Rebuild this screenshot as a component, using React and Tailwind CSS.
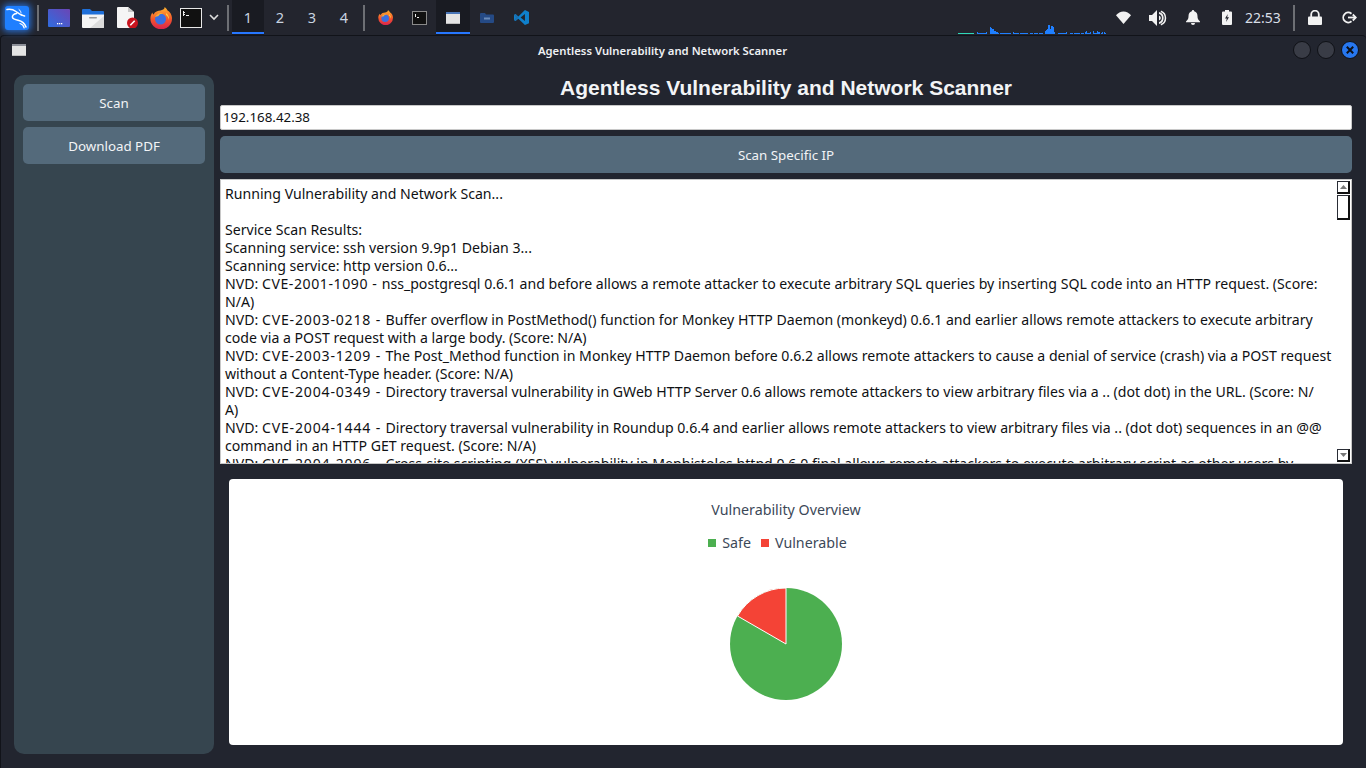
import React from "react";

const Slot = ({ w, active, children }) => (
  <div className={`relative flex h-[35px] shrink-0 items-center justify-center ${active ? "bg-[#191b22]" : ""}`} style={{ width: w }}>
    {children}
    {active && <div className="absolute bottom-[1px] left-0 right-0 h-[2px] bg-[#2777ff]" />}
  </div>
);
const Sep = () => (
  <Slot w={8}><div className="h-[26px] w-[2px] bg-[#6d6f74]" /></Slot>
);

const Kali = () => (
  <div className="h-[24px] w-[24px] rounded-[3px] bg-[#1f7fff] shadow-[0_0_6px_2px_rgba(40,130,255,0.75)]">
    <svg viewBox="0 0 24 24" width="24" height="24" fill="none" stroke="#fff" strokeLinecap="round" strokeLinejoin="round">
      <path strokeWidth="1.5" d="M2 3.500c3.500-.6 6.500.2 9 2 2 1.500 3.600 3.200 5.800 3.400" />
      <path strokeWidth="1.4" d="M16 8.800l3.600 1.200" />
      <path strokeWidth="1.5" d="M11.500 7.500C8.500 8 7 9.500 7.500 11.500c.5 1.700 3 2.200 5.500 2.700 3.500.7 6.500 2.300 8 6.800" />
      <path strokeWidth="1.2" d="M15 17.500c2 .5 3.500 1.700 4.200 4.500" />
      <path strokeWidth="1" d="M14 3.500c1.500 1 2 2.500 2 3.500" />
    </svg>
  </div>
);
const WinBlue = () => (
  <svg width="22" height="18" viewBox="0 0 22 18">
    <defs><linearGradient id="wb" x1="0" y1="1" x2="1" y2="0"><stop offset="0" stopColor="#2f6de0" /><stop offset="1" stopColor="#6b45b5" /></linearGradient></defs>
    <rect width="22" height="18" rx="1" fill="url(#wb)" />
    <rect x="9" y="14" width="1.300" height="1.300" fill="#fff" /><rect x="11" y="14" width="1.300" height="1.300" fill="#fff" /><rect x="13" y="14" width="1.300" height="1.300" fill="#fff" />
  </svg>
);
const Folder = () => (
  <svg width="22" height="20" viewBox="0 0 22 20">
    <path d="M0 2a1 1 0 0 1 1-1h7l2 2h11a1 1 0 0 1 1 1v4H0z" fill="#1f6fd8" />
    <path d="M0 6.500h22V19a1 1 0 0 1-1 1H1a1 1 0 0 1-1-1z" fill="#f4f4f4" />
    <path d="M22 8v11a1 1 0 0 1-1 1H8z" fill="#dcdcdc" />
    <rect x="7" y="9" width="8" height="1.500" rx=".7" fill="#9a9a9a" />
  </svg>
);
const Doc = () => (
  <svg width="21" height="21" viewBox="0 0 21 21">
    <path d="M1 0h10l6 5v15a1 1 0 0 1-1 1H1a1 1 0 0 1-1-1V1a1 1 0 0 1 1-1z" fill="#f5f5f5" />
    <path d="M11 0l6 5h-6z" fill="#c8c8c8" />
    <circle cx="15.500" cy="16" r="5.500" fill="#c8141e" />
    <path d="M13.300 18.200l4.400-4.400" stroke="#fff" strokeWidth="1.600" />
  </svg>
);
const Firefox = ({ s = 22 }) => (
  <svg width={s} height={s} viewBox="0 0 22 22">
    <defs><linearGradient id="ff" x1="0.500" y1="0" x2="0.500" y2="1"><stop offset="0" stopColor="#ffb52e" /><stop offset=".55" stopColor="#f4552c" /><stop offset="1" stopColor="#d8224e" /></linearGradient></defs>
    <path d="M14.500 0c3 2 2.500 3.500 4.500 4.500 2.500 2.500 3 5 3 7a10.800 10.800 0 1 1-21.600 0C.4 9 1.500 6.500 2.500 5.500c0 1 .5 1.800 1 2C5 4.500 8 3.500 10.500 3.500 12.500 3 15 2.500 14.500 0z" fill="url(#ff)" />
    <circle cx="10.500" cy="12" r="5.500" fill="#3a6fe0" />
    <path d="M5 10c1.500-3 5-5 8-3.500-2.500 0-4 1-4.500 2.500z" fill="#ffae2b" />
    <path d="M16 6c2 1.500 3.500 4 3 7-.5-2.500-1.500-4-3-5z" fill="#ffd23f" />
  </svg>
);
const Term = () => (
  <svg width="22" height="20" viewBox="0 0 22 20" shapeRendering="crispEdges">
    <rect x=".5" y=".5" width="21" height="19" rx="1" fill="#111" stroke="#e8e8e8" />
    <path d="M3 3h1v5H3zM2.500 4h2v1h-2zM2.500 6h2v1h-2zM6 7h3v1H6z" fill="#eee" />
  </svg>
);
const Chevron = () => (
  <svg width="10" height="7" viewBox="0 0 10 7" fill="none" stroke="#ddd" strokeWidth="1.600"><path d="M1 1l4 4 4-4" /></svg>
);
const Win = ({ bar }) => (
  <svg width="14" height="12" viewBox="0 0 14 12" shapeRendering="crispEdges">
    <rect width="14" height="12" fill="#e4e4e4" />
    <rect width="14" height="2" fill={bar} />
    <rect y="11" width="14" height="1" fill="#bdbdbd" />
  </svg>
);
const FolderDim = () => (
  <svg width="14" height="10" viewBox="0 0 14 10">
    <path d="M0 1a1 1 0 0 1 1-1h4l1 1.500h7a1 1 0 0 1 1 1V9a1 1 0 0 1-1 1H1a1 1 0 0 1-1-1z" fill="#254a85" />
    <rect x="4" y="4.500" width="6" height="2" fill="#6a8ab8" />
  </svg>
);
const VSCode = () => (
  <svg width="15" height="15" viewBox="0 0 24 24">
    <path d="M17.500 0L24 3v18l-6.500 3L7 13.800 2.500 17.500 0 16V8l2.500-1.500L7 10.200z" fill="#0f80cc" />
    <path d="M17.500 6.500L10.500 12l7 5.500z" fill="#22252e" />
    <path d="M0 8l2.500-1.500 4.500 5.500-4.500 5.500L0 16l3-4z" fill="#1a6fb0" />
  </svg>
);
const Wifi = () => (
  <svg width="15" height="13" viewBox="0 0 15 13"><path d="M7.500 13L0 4.200C2 2 4.500.5 7.500.5S13 2 15 4.200z" fill="#f2f2f2" /></svg>
);
const Speaker = () => (
  <svg width="18" height="16" viewBox="0 0 18 16" fill="#f2f2f2">
    <path d="M0 5h3l5-5v16l-5-5H0z" />
    <path d="M10 2a6.200 6.200 0 0 1 0 12v-2a4.200 4.200 0 0 0 0-8z" />
    <path d="M10 5.500a2.600 2.600 0 0 1 0 5z" />
    <path d="M12 .5a8 8 0 0 1 0 15l-.3-1.500a6.500 6.500 0 0 0 0-12z" />
  </svg>
);
const Bell = () => (
  <svg width="14" height="15" viewBox="0 0 14 15" fill="#f2f2f2">
    <path d="M7 0a1.200 1.200 0 0 1 1.200 1.200c2.300.6 3.300 2.500 3.300 5 0 2.500.8 3.500 2.500 5.300v.8H0v-.8c1.700-1.800 2.500-2.800 2.500-5.300s1-4.400 3.300-5A1.200 1.200 0 0 1 7 0z" />
    <path d="M5 13h4a2 2 0 0 1-4 0z" />
  </svg>
);
const Battery = () => (
  <svg width="10" height="15" viewBox="0 0 10 15">
    <path d="M3 0h4v1.500h2a1 1 0 0 1 1 1V14a1 1 0 0 1-1 1H1a1 1 0 0 1-1-1V2.500a1 1 0 0 1 1-1h2z" fill="#f2f2f2" />
    <path d="M5.800 4L3 8.500h1.800L4 12l3-4.700H5.200z" fill="#23252e" />
  </svg>
);
const Lock = () => (
  <svg width="14" height="15" viewBox="0 0 14 15">
    <path d="M3.200 7V4.500a3.800 3.800 0 0 1 7.600 0V7" fill="none" stroke="#f2f2f2" strokeWidth="1.800" />
    <rect y="6.500" width="14" height="8.500" rx="1" fill="#f2f2f2" />
  </svg>
);
const Logout = () => (
  <svg width="15" height="13" viewBox="0 0 15 13" fill="none" stroke="#f2f2f2" strokeWidth="1.800">
    <path d="M9.500 2.700A5 5 0 1 0 9.500 10.300" />
    <path d="M6 6.500h7.500" />
    <path d="M10.800 3.500l3 3-3 3" />
  </svg>
);

const graph = [
  [958,1,"#2fd8b8"],[959,1,"#2fd8b8"],[960,1,"#2fd8b8"],[961,1,"#2fd8b8"],[962,1,"#2fd8b8"],[963,1,"#2fd8b8"],[964,1,"#2fd8b8"],[965,1,"#2fd8b8"],[966,1,"#2fd8b8"],[967,1,"#2fd8b8"],[968,1,"#2fd8b8"],[969,1,"#2fd8b8"],[970,1,"#2fd8b8"],[971,1,"#2fd8b8"],[972,1,"#2fd8b8"],[973,1,"#2fd8b8"],
  [977,2],[978,1],[979,1],[980,1],[981,1],[982,1],[983,1],[984,1],[985,1],[986,2],
  [990,7],[991,6],[992,5],[993,5],[994,3],[995,3],[996,2],[997,2],[998,1],[1000,1],[1001,1],[1002,1],[1003,1],[1004,1],[1005,1],[1006,1],[1007,1],[1008,1],[1009,1],[1010,1],
  [1013,2],[1014,1],[1015,1],[1016,1],[1017,1],[1018,1],[1020,1],[1021,1],[1022,1],[1023,1],[1024,1],[1025,1],[1026,1],[1027,1],
  [1030,1],[1031,1],[1032,1],[1034,1],[1035,1],[1036,1],[1037,1],[1039,1],[1040,1],[1041,1],[1042,1],
  [1045,3],[1046,4],[1047,5],[1048,9],[1049,9],[1050,5],[1051,8],[1052,8],[1053,7],[1054,2],[1058,1],[1059,1],[1060,1],[1061,1],[1062,1],[1063,1],[1064,1],[1065,1],[1066,2],
  [1070,1],[1071,1],[1072,1],[1074,1],[1075,1],[1076,1],[1077,1],[1078,1],[1079,1],[1081,1],[1082,1],[1083,1],[1085,2],[1086,3],[1087,1],[1088,1],[1089,1],[1090,2],
  [1093,3],[1094,1],[1095,1],[1096,1],[1097,3],[1098,2],[1099,2],[1101,1],[1102,2],[1104,2],[1105,1],
];
const NetGraph = () => (
  <svg width="148" height="11" viewBox="958 0 148 11" shapeRendering="crispEdges" className="mt-auto mb-[1px]">
    {graph.map(([x, h, c], i) => <rect key={i} x={x} y={11 - h} width="1" height={h} fill={c || "#1f7fff"} />)}
  </svg>
);

const WinBtn = ({ close }) => (
  <div className={`flex h-[18px] w-[18px] items-center justify-center rounded-full border border-[#0f1116] ${close ? "bg-[#2777ef]" : "bg-[#393c46]"}`}>
    {close && <svg width="8" height="8" viewBox="0 0 8 8" stroke="#0d1016" strokeWidth="2"><path d="M.8.8l6.400 6.400M7.200.8L.8 7.200" /></svg>}
  </div>
);

const lines = [
  "Running Vulnerability and Network Scan...",
  "",
  "Service Scan Results:",
  "Scanning service: ssh version 9.9p1 Debian 3...",
  "Scanning service: http version 0.6...",
  "NVD: CVE-2001-1090 - nss_postgresql 0.6.1 and before allows a remote attacker to execute arbitrary SQL queries by inserting SQL code into an HTTP request. (Score:",
  "N/A)",
  "NVD: CVE-2003-0218 - Buffer overflow in PostMethod() function for Monkey HTTP Daemon (monkeyd) 0.6.1 and earlier allows remote attackers to execute arbitrary",
  "code via a POST request with a large body. (Score: N/A)",
  "NVD: CVE-2003-1209 - The Post_Method function in Monkey HTTP Daemon before 0.6.2 allows remote attackers to cause a denial of service (crash) via a POST request",
  "without a Content-Type header. (Score: N/A)",
  "NVD: CVE-2004-0349 - Directory traversal vulnerability in GWeb HTTP Server 0.6 allows remote attackers to view arbitrary files via a .. (dot dot) in the URL. (Score: N/",
  "A)",
  "NVD: CVE-2004-1444 - Directory traversal vulnerability in Roundup 0.6.4 and earlier allows remote attackers to view arbitrary files via .. (dot dot) sequences in an @@",
  "command in an HTTP GET request. (Score: N/A)",
  "NVD: CVE-2004-2096 - Cross-site scripting (XSS) vulnerability in Mephistoles httpd 0.6.0 final allows remote attackers to execute arbitrary script as other users by",
];

const LogLine = ({ text }) => {
  const m = text.match(/^(NVD: )(CVE-\d+-\d+ - )(.*)$/);
  if (!m) return <div className="h-[18px]">{text}</div>;
  return (
    <div className="h-[18px]">
      {m[1]}<span className={m[2].startsWith("CVE-2001") ? "tracking-[0.56px]" : "tracking-[0.8px]"}>{m[2]}</span>{m[3]}
    </div>
  );
};

const ScrollBtn = ({ up }) => (
  <div className="flex h-[13px] w-[13px] items-center justify-center border border-[#2a2d36] border-r-2 border-b-2 border-r-[#111] border-b-[#111] bg-white">
    <svg width="7" height="4" viewBox="0 0 7 4" fill="#777">
      <path d={up ? "M3.500 0L7 4H0z" : "M0 0h7L3.500 4z"} />
    </svg>
  </div>
);

export default function App() {
  return (
    <div className="flex h-[768px] w-[1366px] flex-col overflow-hidden bg-[#22252f] font-['Noto_Sans',sans-serif] text-[13.33px]">
      <div className="flex h-[35px] shrink-0 items-center bg-[#23252e]">
        <Slot w={34}><Kali /></Slot>
        <Sep />
        <Slot w={34}><WinBlue /></Slot>
        <Slot w={34}><Folder /></Slot>
        <Slot w={34}><Doc /></Slot>
        <Slot w={34}><Firefox /></Slot>
        <Slot w={26}><Term /></Slot>
        <Slot w={20}><Chevron /></Slot>
        <Sep />
        {["1", "2", "3", "4"].map((n, i) => (
          <Slot key={n} w={32} active={i === 0}><span className="text-[14.5px] text-[#c9d4e0]">{n}</span></Slot>
        ))}
        <Sep />
        <Slot w={34}><Firefox s={15} /></Slot>
        <Slot w={34}><svg width="15" height="14" viewBox="0 0 15 14" shapeRendering="crispEdges"><rect x=".5" y=".5" width="14" height="13" rx="1" fill="#111" stroke="#8a8a8a" /><path d="M3 3h1v3H3zM5 6h2v1H5z" fill="#eee" /></svg></Slot>
        <Slot w={34} active><Win bar="#4a76b8" /></Slot>
        <Slot w={34}><FolderDim /></Slot>
        <Slot w={34}><VSCode /></Slot>
        <div className="ml-[420px] flex h-[35px] w-[148px] shrink-0"><NetGraph /></div>
        <div className="ml-auto flex items-center">
          <Slot w={34}><Wifi /></Slot>
          <Slot w={36}><Speaker /></Slot>
          <Slot w={34}><Bell /></Slot>
          <Slot w={34}><Battery /></Slot>
          <Slot w={38}><span className="text-[14px] text-[#d8dee6]">22:53</span></Slot>
          <div className="w-[8px]" />
          <Sep />
          <Slot w={34}><Lock /></Slot>
          <Slot w={34}><Logout /></Slot>
        </div>
      </div>

      <div className="flex min-h-0 flex-1 flex-col rounded-t-[4px] border-t border-l border-[#111319] bg-[#22252f]">
        <div className="relative flex h-[30px] shrink-0 items-center justify-center pr-[42px]">
          <div className="absolute left-[11px] top-[8px]"><Win bar="#8d9099" /></div>
          <span className="text-[11.3px] font-semibold text-[#eef0f3]">Agentless Vulnerability and Network Scanner</span>
          <div className="absolute right-[7px] top-[5px] flex gap-[6px]"><WinBtn /><WinBtn /><WinBtn close /></div>
        </div>

        <div className="flex min-h-0 flex-1 gap-[6px] pb-[14px] pl-[13px] pr-[14px] pt-[9px]">
          <div className="flex w-[200px] shrink-0 flex-col gap-[6px] rounded-[10px] bg-[#36454f] p-[9px]">
            <div className="flex h-[37px] items-center justify-center rounded-[5px] bg-[#546a7b] pt-[2px] text-[#f2f4f6]">Scan</div>
            <div className="flex h-[37px] items-center justify-center rounded-[5px] bg-[#546a7b] pt-[2px] text-[#f2f4f6]">Download PDF</div>
          </div>
          <div className="flex min-w-0 flex-1 flex-col pb-0">
            <div className="flex h-[30px] shrink-0 items-center justify-center pb-[5px] font-['Liberation_Sans',sans-serif] text-[21px] font-bold text-[#f2f4f6]">Agentless Vulnerability and Network Scanner</div>
            <div className="flex h-[25px] shrink-0 items-center rounded-[2px] border border-[#c8c8c8] bg-white pl-[2px] text-[#0f1114]">192.168.42.38</div>
            <div className="mt-[6px] flex h-[37px] shrink-0 items-center justify-center rounded-[5px] bg-[#546a7b] pt-[2px] text-[#f2f4f6]">Scan Specific IP</div>
            <div className="relative mt-[6px] h-[285px] shrink-0 overflow-hidden border border-[#c8c8c8] bg-white pl-[4px] pt-[5px]">
              <div className="whitespace-pre text-[14.12px] leading-[18px] text-[#0f1114]">
                {lines.map((t, i) => <LogLine key={i} text={t} />)}
              </div>
              <div className="absolute bottom-0 right-0 top-0 flex w-[14px] flex-col bg-white pt-[1px]">
                <ScrollBtn up />
                <div className="mt-[1px] h-[25px] w-[13px] border border-[#2a2d36] border-r-2 border-b-2 border-r-[#111] border-b-[#111] bg-white" />
                <div className="mt-auto mb-[1px]"><ScrollBtn /></div>
              </div>
            </div>
            <div className="mx-[9px] mb-[9px] mt-[15px] flex min-h-0 flex-1 flex-col items-center rounded-[4px] bg-white text-[#3c4858]">
              <div className="mt-[21px] text-[14.25px] leading-[19px]">Vulnerability Overview</div>
              <div className="mr-[17px] mt-[14px] flex items-center text-[14.25px] leading-[19px]">
                <span className="mr-[6px] h-[8px] w-[8px] bg-[#4caf50]" />Safe
                <span className="ml-[10px] mr-[6px] h-[8px] w-[8px] bg-[#f44336]" />Vulnerable
              </div>
              <svg width="114" height="114" viewBox="-57 -57 114 114" className="mt-[35px]">
                <circle r="56" fill="#4caf50" />
                <path d="M0 0L-48.500 -28A56 56 0 0 1 0 -56Z" fill="#f44336" stroke="#fff" strokeWidth="1" />
              </svg>
            </div>
          </div>
        </div>
      </div>
    </div>
  );
}
